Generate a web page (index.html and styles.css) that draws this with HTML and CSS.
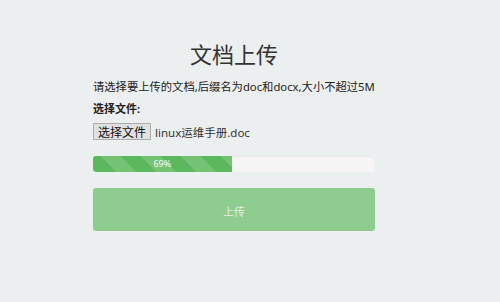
FILE: index.html
```html
<!DOCTYPE html>
<html lang="zh-CN">
<head>
<meta charset="utf-8">
<title>文档上传</title>
<link rel="stylesheet" href="styles.css">
</head>
<body>
<div class="page">
  <h1 class="title">文档上传</h1>
  <p class="hint">请选择要上传的文档,后缀名为doc和docx,大小不超过5M</p>
  <div class="label">选择文件:</div>
  <div class="file-row">
    <span class="file-btn">选择文件</span>
    <span class="file-name">linux运维手册.doc</span>
  </div>
  <div class="progress">
    <div class="progress-bar" style="width: 49.2%">69%</div>
  </div>
  <div class="upload-btn">上传</div>
</div>
</body>
</html>
```
FILE: styles.css
```css
html, body {
  margin: 0;
  padding: 0;
}
body {
  background: #eceff0;
  font-family: "Noto Sans", "Noto Sans CJK SC", sans-serif;
  color: #333;
  width: 500px;
  height: 302px;
  overflow: hidden;
}
.page {
  width: 282px;
  margin-left: 93px;
  padding-top: 38px;
}
.title {
  margin: 0;
  font-size: 22px;
  font-weight: normal;
  line-height: 30px;
  text-align: center;
  color: #333;
  font-family: "Noto Sans CJK SC", sans-serif;
}
.hint {
  margin: 11px 0 0;
  font-size: 11.3px;
  line-height: 16px;
  white-space: nowrap;
  color: #222;
}
.label {
  margin-top: 6px;
  font-size: 11px;
  line-height: 16px;
  font-weight: bold;
  color: #222;
}
.file-row {
  margin-top: 6px;
  display: flex;
  align-items: center;
  gap: 4px;
  height: 17px;
}
.file-btn {
  box-sizing: border-box;
  height: 17px;
  width: 58px;
  border: 1px solid #adadad;
  background: #e1e1e1;
  font-size: 12px;
  line-height: 15px;
  text-align: center;
  color: #111;
  font-family: "Noto Sans CJK SC", sans-serif;
}
.file-name {
  font-size: 11.5px;
  color: #333;
}
.progress {
  margin-top: 16px;
  height: 16px;
  background: #f5f5f5;
  border-radius: 3px;
  overflow: hidden;
  box-shadow: inset 0 1px 2px rgba(0, 0, 0, 0.06);
}
.progress-bar {
  height: 100%;
  background-color: #5cb85c;
  background-image: linear-gradient(45deg,
    rgba(255, 255, 255, 0.15) 25%, transparent 25%,
    transparent 50%, rgba(255, 255, 255, 0.15) 50%,
    rgba(255, 255, 255, 0.15) 75%, transparent 75%, transparent);
  background-size: 40px 40px;
  background-position: 8px 0;
  color: #fff;
  font-size: 9px;
  line-height: 16px;
  text-align: center;
}
.upload-btn {
  margin-top: 16px;
  height: 43px;
  background: #8fcc8f;
  border-radius: 3px;
  color: #e2efe2;
  font-size: 11px;
  line-height: 46px;
  text-align: center;
  font-family: "Noto Sans CJK SC", sans-serif;
}
```
